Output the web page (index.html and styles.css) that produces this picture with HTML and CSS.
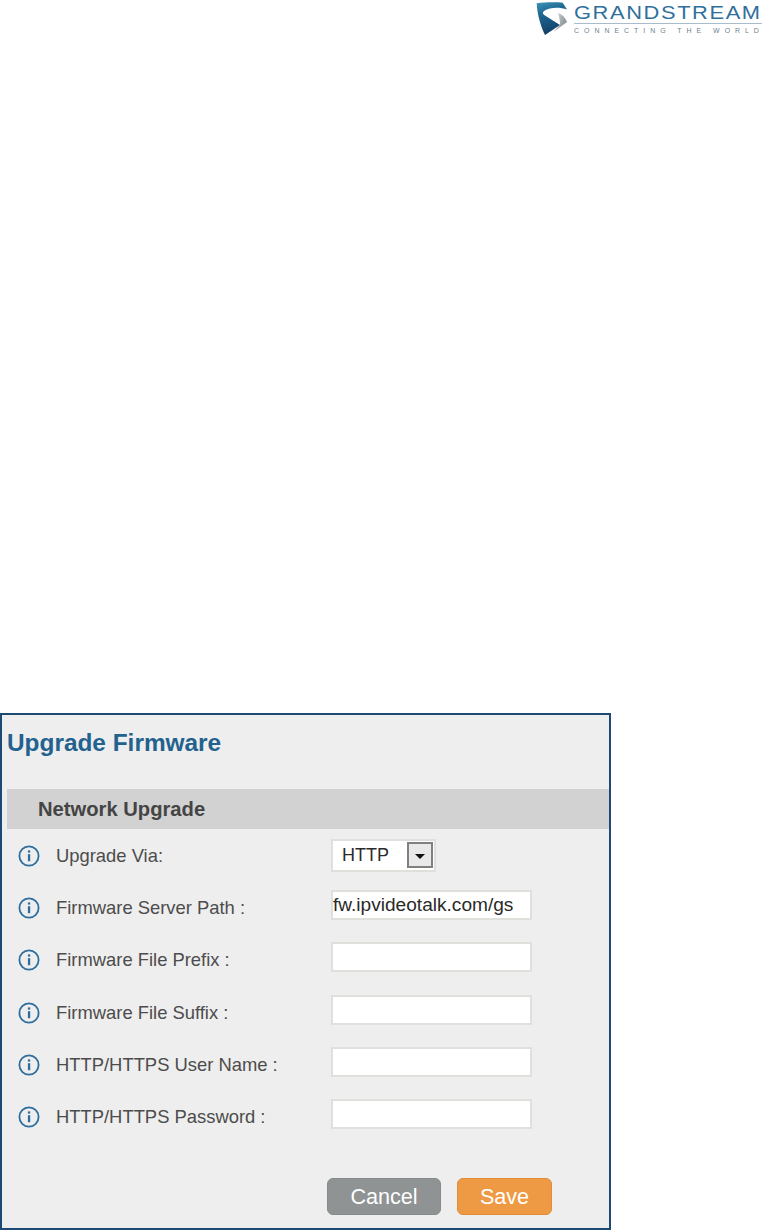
FILE: index.html
```html
<!DOCTYPE html>
<html lang="en">
<head>
<meta charset="utf-8">
<title>Upgrade Firmware</title>
<link rel="stylesheet" href="styles.css">
</head>
<body>
<header class="brand">
  <svg class="brand-mark" width="36" height="36" viewBox="0 0 36 36" aria-hidden="true">
    <defs>
      <linearGradient id="markBlue" x1="0" y1="0" x2="0.3" y2="1">
        <stop offset="0" stop-color="#3f94b8"/>
        <stop offset="0.35" stop-color="#1f6a94"/>
        <stop offset="1" stop-color="#123f68"/>
      </linearGradient>
      <linearGradient id="markGrey" x1="0" y1="0" x2="1" y2="0.6">
        <stop offset="0" stop-color="#dfe3e5"/>
        <stop offset="1" stop-color="#7f888d"/>
      </linearGradient>
    </defs>
    <path fill="url(#markBlue)" d="M2.7 2.3 C12 1 22 1 28.7 1.7 L33 8.5 C26 6 16 6 10 10 C8 12 9 13 11 14.5 L26 24 L11 34 C7 26 3 13 2.7 2.3 Z"/>
    <path fill="url(#markGrey)" d="M24 12 C28 13 31 16 33 21 L19.5 31 L26 23.5 C26 19 25 15 24 12 Z"/>
  </svg>
  <div class="brand-text">
    <div class="brand-name">GRANDSTREAM</div>
    <div class="brand-rule"></div>
    <div class="brand-tag">CONNECTING THE WORLD</div>
  </div>
</header>
<main class="panel">
  <h1 class="title">Upgrade Firmware</h1>
  <h2 class="section">Network Upgrade</h2>
  <div class="rows">
    <div class="row">
      <svg class="info" width="22" height="22" viewBox="0 0 22 22" aria-hidden="true"><circle cx="11" cy="11" r="9.6"/><rect x="9.9" y="9.2" width="2.3" height="7"/><rect x="9.9" y="5.4" width="2.3" height="2.2"/></svg>
      <span class="label">Upgrade Via:</span>
      <div class="select"><span class="select-value">HTTP</span><span class="select-btn"><span class="caret"></span></span></div>
    </div>
    <div class="row">
      <svg class="info" width="22" height="22" viewBox="0 0 22 22" aria-hidden="true"><circle cx="11" cy="11" r="9.6"/><rect x="9.9" y="9.2" width="2.3" height="7"/><rect x="9.9" y="5.4" width="2.3" height="2.2"/></svg>
      <span class="label">Firmware Server Path :</span>
      <div class="input">fw.ipvideotalk.com/gs</div>
    </div>
    <div class="row">
      <svg class="info" width="22" height="22" viewBox="0 0 22 22" aria-hidden="true"><circle cx="11" cy="11" r="9.6"/><rect x="9.9" y="9.2" width="2.3" height="7"/><rect x="9.9" y="5.4" width="2.3" height="2.2"/></svg>
      <span class="label">Firmware File Prefix :</span>
      <div class="input"></div>
    </div>
    <div class="row">
      <svg class="info" width="22" height="22" viewBox="0 0 22 22" aria-hidden="true"><circle cx="11" cy="11" r="9.6"/><rect x="9.9" y="9.2" width="2.3" height="7"/><rect x="9.9" y="5.4" width="2.3" height="2.2"/></svg>
      <span class="label">Firmware File Suffix :</span>
      <div class="input"></div>
    </div>
    <div class="row">
      <svg class="info" width="22" height="22" viewBox="0 0 22 22" aria-hidden="true"><circle cx="11" cy="11" r="9.6"/><rect x="9.9" y="9.2" width="2.3" height="7"/><rect x="9.9" y="5.4" width="2.3" height="2.2"/></svg>
      <span class="label">HTTP/HTTPS User Name :</span>
      <div class="input"></div>
    </div>
    <div class="row">
      <svg class="info" width="22" height="22" viewBox="0 0 22 22" aria-hidden="true"><circle cx="11" cy="11" r="9.6"/><rect x="9.9" y="9.2" width="2.3" height="7"/><rect x="9.9" y="5.4" width="2.3" height="2.2"/></svg>
      <span class="label">HTTP/HTTPS Password :</span>
      <div class="input"></div>
    </div>
  </div>
  <div class="actions">
    <div class="btn btn-cancel">Cancel</div>
    <div class="btn btn-save">Save</div>
  </div>
</main>
</body>
</html>
```
FILE: styles.css
```css
html, body {
  margin: 0;
  padding: 0;
  background: #fff;
  overflow: hidden;
}
body {
  width: 762px;
  height: 1230px;
  font-family: "Liberation Sans", Arial, sans-serif;
}
.brand {
  height: 713px;
  box-sizing: border-box;
  padding: 1px 0 0 534px;
  display: flex;
  align-items: flex-start;
  gap: 4px;
}
.brand-mark {
  flex: none;
}
.brand-text {
  flex: none;
  width: 188px;
  white-space: nowrap;
}
.brand-name {
  color: #2f6f9c;
  font-size: 19px;
  line-height: 19px;
  letter-spacing: 1.4px;
  margin-top: 2px;
  transform: scaleX(1.15);
  transform-origin: left center;
}
.brand-rule {
  height: 1px;
  background: #a9bccb;
  margin-top: 1px;
}
.brand-tag {
  color: #6f7f8c;
  font-size: 7px;
  line-height: 8px;
  letter-spacing: 4.95px;
  margin-top: 3px;
}
.panel {
  width: 611px;
  height: 517px;
  box-sizing: border-box;
  border: 2px solid #1c4a73;
  background: #eeeeee;
  padding: 0 0 0 5px;
}
.title {
  margin: 0;
  color: #23618f;
  font-size: 24.4px;
  line-height: 24px;
  font-weight: bold;
  padding-top: 16px;
}
.section {
  margin: 34px 0 0;
  height: 40px;
  background: #d2d2d2;
  color: #444;
  font-size: 20.2px;
  line-height: 40px;
  font-weight: bold;
  padding-left: 31px;
}
.rows {
  padding-top: 1px;
}
.row {
  display: flex;
  align-items: center;
  height: 52px;
  padding-left: 11px;
  margin-bottom: 0.2px;
}
.info {
  flex: none;
  fill: #2d6e9e;
}
.info circle {
  fill: none;
  stroke: #2d6e9e;
  stroke-width: 1.8;
}
.label {
  flex: none;
  width: 275px;
  margin-left: 16px;
  color: #4c4c4c;
  font-size: 18.4px;
}
.input, .select {
  box-sizing: border-box;
  background: #fff;
  border: 2px solid #dfdfdb;
  color: #2a2a2a;
}
.input {
  width: 201px;
  height: 30px;
  margin-bottom: 6px;
  font-size: 19.1px;
  line-height: 26px;
  white-space: nowrap;
}
.select {
  width: 105px;
  height: 33px;
  margin-bottom: 2px;
  font-size: 18px;
  display: flex;
  align-items: center;
  justify-content: space-between;
  padding: 0 1px 0 9px;
}
.select-btn {
  box-sizing: border-box;
  width: 26px;
  height: 26px;
  display: flex;
  align-items: center;
  justify-content: center;
  background: #e9e9e9;
  border: 2px solid #808080;
}
.caret {
  width: 0;
  height: 0;
  margin-top: 3px;
  border-left: 5px solid transparent;
  border-right: 5px solid transparent;
  border-top: 5px solid #111;
}
.actions {
  display: flex;
  gap: 16px;
  padding: 35px 0 0 320px;
}
.btn {
  box-sizing: border-box;
  height: 37px;
  border-radius: 6px;
  color: #fff;
  font-size: 21.6px;
  line-height: 35px;
  text-align: center;
}
.btn-cancel {
  width: 114px;
  background: #8f9394;
  border: 1px solid #868a8b;
}
.btn-save {
  width: 95px;
  background: #ee9a44;
  border: 1px solid #e08c38;
}
```
